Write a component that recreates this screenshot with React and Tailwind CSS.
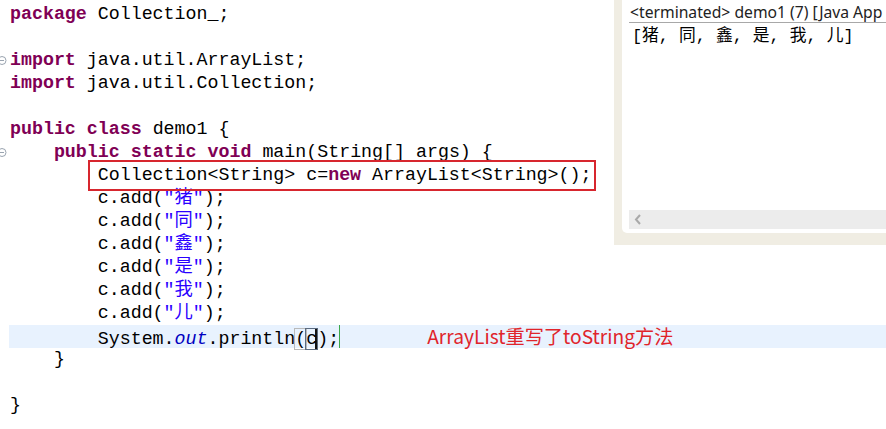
import React from 'react';

const mono = { fontFamily: '"Liberation Mono", "Noto Sans CJK SC", monospace' };

// token helpers
const K = ({ children }) => <span className="font-bold text-[#7f0055]">{children}</span>;
const S = ({ children }) => <span className="text-[#2a00ff]">{children}</span>;

const FoldMarker = () => (
    <svg width="9" height="23" viewBox="0 0 9 23" className="block">
        <circle cx="2" cy="11.5" r="4" fill="white" stroke="#9aa4b0" strokeWidth="1" />
        <line x1="0" y1="11.5" x2="4" y2="11.5" stroke="#9aa4b0" strokeWidth="1" />
    </svg>
);

const Line = ({ fold, active, children }) => (
    <div className="flex h-[23px] leading-[23px]">
        <div className="w-[9px] shrink-0">{fold && <FoldMarker />}</div>
        <div className={`flex-1 pl-px whitespace-pre ${active ? 'bg-[#e8f2fe]' : ''}`}>{children}</div>
    </div>
);

const adds = ['猪', '同', '鑫', '是', '我', '儿'];

const Console = () => (
    <div className="absolute top-0 right-0 w-[272px] h-[245px] bg-[#f0ede3] pl-[8px] pb-[12px] flex">
        <div className="flex-1 bg-white rounded-bl-[5px] flex flex-col">
            <div
                className="ml-[7px] h-[23px] border-b border-[#a8a8a8] text-[15.7px] leading-[24px] text-[#222] whitespace-nowrap pl-px"
                style={{ fontFamily: '"Noto Sans", "Liberation Sans", sans-serif' }}
            >
                &lt;terminated&gt; demo1 (7) [Java App
            </div>
            <div className="ml-[10px] mt-[2px] text-[16.8px] leading-[24px] text-black whitespace-pre" style={mono}>
                [猪, 同, 鑫, 是, 我, 儿]
            </div>
            <div className="flex-1" />
            <div className="ml-[7px] mb-[4px] h-[19px] bg-[#ececec] flex items-center pl-[5px]">
                <svg width="8" height="11" viewBox="0 0 8 11">
                    <polyline points="6,1 2,5.5 6,10" fill="none" stroke="#a9a9a9" strokeWidth="2" />
                </svg>
            </div>
        </div>
    </div>
);

export default function App() {
    return (
        <div className="relative w-[886px] h-[429px] overflow-hidden bg-white">
            <div className="pt-[2.5px] text-[18.3px] text-black" style={mono}>
                <Line><K>package</K> Collection_;</Line>
                <Line />
                <Line fold><K>import</K> java.util.ArrayList;</Line>
                <Line><K>import</K> java.util.Collection;</Line>
                <Line />
                <Line><K>public</K> <K>class</K> demo1 {'{'}</Line>
                <Line fold>    <K>public</K> <K>static</K> <K>void</K> main(String[] args) {'{'}</Line>
                <Line>
                    {'        '}
                    <span className="relative">
                        Collection&lt;String&gt; c=<K>new</K> ArrayList&lt;String&gt;();
                        <span className="absolute -left-[10px] -right-[5px] -top-[5px] -bottom-[6px] border-2 border-[#d7262e]" />
                    </span>
                </Line>
                {adds.map((ch) => (
                    <Line key={ch}>{'        '}c.add(<S>"{ch}"</S>);</Line>
                ))}
                <Line active>
                    {'        '}System.<span className="italic text-[#0000c0]">out</span>.println
                    <span className="outline outline-[#b9b9b9]">(</span>
                    <span className="outline outline-[#5b6b80] shadow-[inset_-2px_0_0_#111]">c</span>);
                    <span className="inline-block w-px h-[23px] align-top bg-[#3aa84a]" />
                    <span
                        className="ml-[87px] text-[19.2px] text-[#e0242b]"
                        style={{ fontFamily: '"Noto Sans CJK SC", "Noto Sans", sans-serif' }}
                    >
                        ArrayList重写了toString方法
                    </span>
                </Line>
                <Line>    {'}'}</Line>
                <Line />
                <Line>{'}'}</Line>
            </div>
            <Console />
        </div>
    );
}
